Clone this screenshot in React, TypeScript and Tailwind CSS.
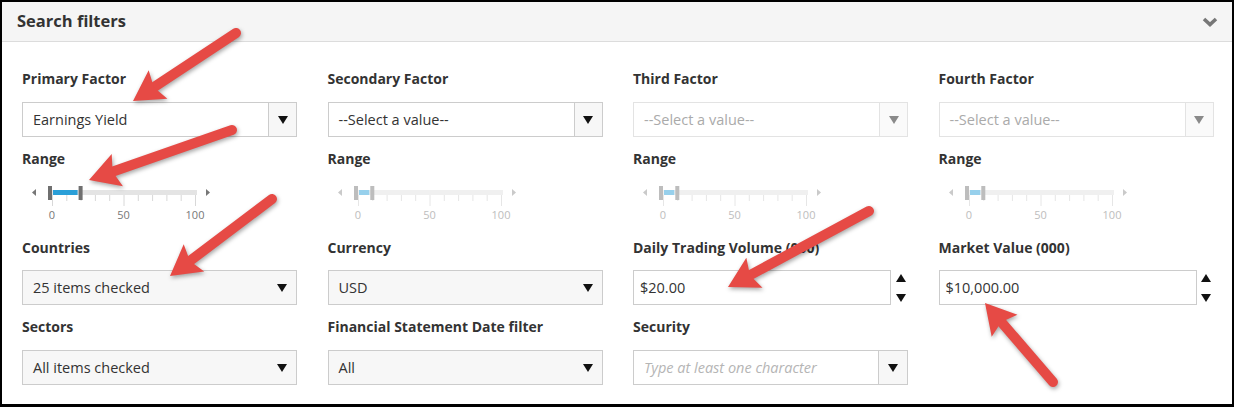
import React from "react";

const FONT = { fontFamily: '"Open Sans", "Noto Sans", Arial, sans-serif' };

function Tri({ color = "#111", size = 10 }: { color?: string; size?: number }) {
  return (
    <svg width={size} height={size * 0.8} viewBox="0 0 10 8">
      <polygon points="0,0 10,0 5,8" fill={color} />
    </svg>
  );
}

function Label({ children }: { children: React.ReactNode }) {
  return <div className="h-5 leading-5 text-[14px] font-bold text-[#333] whitespace-nowrap">{children}</div>;
}

function FactorSelect({ value, disabled }: { value: string; disabled?: boolean }) {
  return (
    <div
      className={`mt-[13px] h-[35px] flex border ${disabled ? "border-[#e3e3e3]" : "border-[#ccc]"} bg-white`}
    >
      <div className={`flex-1 flex items-center pl-[10px] text-[14.5px] ${disabled ? "text-[#aaa]" : "text-[#333]"}`}>{value}</div>
      <div
        className={`w-[28px] flex items-center justify-center border-l ${disabled ? "border-[#e3e3e3] bg-[#fafafa]" : "border-[#ccc] bg-[#f7f7f7]"}`}
      >
        <Tri color={disabled ? "#8a8a8a" : "#111"} />
      </div>
    </div>
  );
}

function PlainSelect({ value, mt }: { value: string; mt: string }) {
  return (
    <div className={`${mt} h-[35px] flex items-center border border-[#ccc] bg-[#f7f7f7] pl-[10px] pr-[9px]`}>
      <div className="flex-1 text-[14.5px] text-[#333]">{value}</div>
      <Tri />
    </div>
  );
}

function ComboSelect({ placeholder }: { placeholder: string }) {
  return (
    <div className="mt-[13px] h-[35px] flex border border-[#ccc] bg-white">
      <div className="flex-1 flex items-center pl-[10px] text-[14.5px] italic text-[#b5b5b5]">{placeholder}</div>
      <div className="w-[29px] flex items-center justify-center border-l border-[#ccc] bg-[#f7f7f7]">
        <Tri />
      </div>
    </div>
  );
}

function NumberInput({ value }: { value: string }) {
  return (
    <div className="mt-[12px] h-[35px] flex items-center">
      <div className="w-[258px] h-full flex items-center border border-[#ccc] bg-white pl-[6px] text-[14.5px] text-[#333]">
        {value}
      </div>
      <div className="flex-1 flex flex-col items-center justify-center gap-[12px] pl-[2px]">
        <svg width="10" height="8" viewBox="0 0 10 8"><polygon points="5,0 10,8 0,8" fill="#111" /></svg>
        <svg width="10" height="8" viewBox="0 0 10 8"><polygon points="0,0 10,0 5,8" fill="#111" /></svg>
      </div>
    </div>
  );
}

function RangeSlider({ hi, disabled }: { hi: number; disabled?: boolean }) {
  const x0 = 30;
  const x100 = 173;
  const xv = (v: number) => x0 + ((x100 - x0) * v) / 100;
  const c = disabled
    ? { arrow: "#cacaca", track: "#f0f0f0", handle: "#bdbdbd", sel: "#97d0ec", tick: "#e6e6e6", num: "#bdbdbd" }
    : { arrow: "#777", track: "#e4e4e4", handle: "#6f6f6f", sel: "#2a9fd8", tick: "#d8d8d8", num: "#777" };
  const ticks = Array.from({ length: 11 }, (_, i) => i * 10);
  const hx = xv(hi);
  return (
    <svg width="200" height="69" viewBox="0 0 200 69" className="block">
      <polygon points="14,20 10,23.5 14,27" fill={c.arrow} />
      <polygon points="184,20 188,23.5 184,27" fill={c.arrow} />
      <rect x={x0 - 2} y="21" width={x100 - x0 + 4} height="5" fill={c.track} />
      {ticks.map((t) => (
        <line
          key={t}
          x1={xv(t) + 0.5}
          x2={xv(t) + 0.5}
          y1="26"
          y2={t % 50 === 0 ? 37 : 32}
          stroke={c.tick}
          strokeWidth="1"
        />
      ))}
      <rect x={x0 + 1} y="21" width={hx - x0 - 4} height="5" fill={c.sel} />
      <rect x={x0 - 4} y="17" width="4" height="14" fill={c.handle} />
      <rect x={hx - 2} y="17" width="4" height="14" fill={c.handle} />
      {[0, 50, 100].map((t) => (
        <text
          key={t}
          x={xv(t)}
          y="50"
          fontSize="11"
          textAnchor="middle"
          fill={c.num}
          style={FONT}
        >
          {t}
        </text>
      ))}
    </svg>
  );
}

function Arrow({ x1, y1, x2, y2 }: { x1: number; y1: number; x2: number; y2: number }) {
  const dx = x2 - x1;
  const dy = y2 - y1;
  const len = Math.hypot(dx, dy);
  const ux = dx / len;
  const uy = dy / len;
  const nx = -uy;
  const ny = ux;
  const hl = 30;
  const hw = 34;
  const bx = x2 - ux * hl;
  const by = y2 - uy * hl;
  const notch = 5;
  const pts = [
    [x2, y2],
    [bx + (nx * hw) / 2, by + (ny * hw) / 2],
    [bx + ux * notch, by + uy * notch],
    [bx - (nx * hw) / 2, by - (ny * hw) / 2],
  ]
    .map((p) => p.join(","))
    .join(" ");
  return (
    <g>
      <line x1={x1} y1={y1} x2={bx + ux * 6} y2={by + uy * 6} stroke="#e64a45" strokeWidth="10" strokeLinecap="round" />
      <polygon points={pts} fill="#e64a45" />
    </g>
  );
}

export default function App() {
  return (
    <div className="relative w-[1234px] h-[407px] bg-white border-l-2 border-t-2 border-r-2 border-b-[3px] border-black overflow-hidden" style={FONT}>
      <div className="h-[40px] bg-[#f5f5f5] border-b border-[#dcdcdc] flex items-center justify-between pl-[15px] pr-[14px]">
        <div className="text-[16.5px] font-bold text-[#333]">Search filters</div>
        <svg width="16" height="10" viewBox="0 0 16 10">
          <polyline points="2,2 8,7.5 14,2" fill="none" stroke="#777" strokeWidth="3.6" />
        </svg>
      </div>

      <div className="grid grid-cols-[275px_275px_275px_275px] gap-x-[30.5px] pl-[20px] pt-[27px]">
        {/* Column 1 */}
        <div className="flex flex-col">
          <Label>Primary Factor</Label>
          <FactorSelect value="Earnings Yield" />
          <div className="mt-[12px]"><Label>Range</Label></div>
          <RangeSlider hi={20} />
          <Label>Countries</Label>
          <PlainSelect value="25 items checked" mt="mt-[12px]" />
          <div className="mt-[12px]"><Label>Sectors</Label></div>
          <PlainSelect value="All items checked" mt="mt-[13px]" />
        </div>
        {/* Column 2 */}
        <div className="flex flex-col">
          <Label>Secondary Factor</Label>
          <FactorSelect value="--Select a value--" />
          <div className="mt-[12px]"><Label>Range</Label></div>
          <RangeSlider hi={10} disabled />
          <Label>Currency</Label>
          <PlainSelect value="USD" mt="mt-[12px]" />
          <div className="mt-[12px]"><Label>Financial Statement Date filter</Label></div>
          <PlainSelect value="All" mt="mt-[13px]" />
        </div>
        {/* Column 3 */}
        <div className="flex flex-col">
          <Label>Third Factor</Label>
          <FactorSelect value="--Select a value--" disabled />
          <div className="mt-[12px]"><Label>Range</Label></div>
          <RangeSlider hi={10} disabled />
          <Label>Daily Trading Volume (000)</Label>
          <NumberInput value="$20.00" />
          <div className="mt-[12px]"><Label>Security</Label></div>
          <ComboSelect placeholder="Type at least one character" />
        </div>
        {/* Column 4 */}
        <div className="flex flex-col">
          <Label>Fourth Factor</Label>
          <FactorSelect value="--Select a value--" disabled />
          <div className="mt-[12px]"><Label>Range</Label></div>
          <RangeSlider hi={10} disabled />
          <Label>Market Value (000)</Label>
          <NumberInput value="$10,000.00" />
        </div>
      </div>

      <svg
        className="absolute left-[-2px] top-[-2px] pointer-events-none"
        width="1234"
        height="407"
        viewBox="0 0 1234 407"
        style={{ filter: "drop-shadow(1px 2px 2px rgba(0,0,0,0.35))" }}
      >
        <Arrow x1={236} y1={33} x2={133} y2={101} />
        <Arrow x1={232} y1={130} x2={89} y2={180} />
        <Arrow x1={272} y1={199} x2={170} y2={276} />
        <Arrow x1={869} y1={211} x2={728} y2={287} />
        <Arrow x1={1053} y1={382} x2={985} y2={303} />
      </svg>
    </div>
  );
}
